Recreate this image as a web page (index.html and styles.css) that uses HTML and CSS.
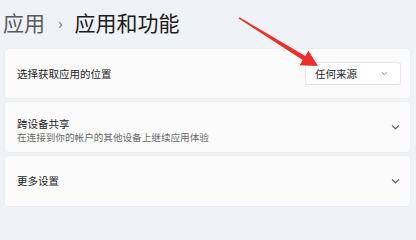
FILE: index.html
```html
<!DOCTYPE html>
<html lang="zh">
<head>
<meta charset="utf-8">
<link rel="stylesheet" href="styles.css">
</head>
<body>
<div class="page">
  <header class="header">
    <span class="crumb">应用</span>
    <span class="sep">›</span>
    <span class="title">应用和功能</span>
  </header>
  <div class="cards">
    <div class="card">
      <div class="label">选择获取应用的位置</div>
      <div class="select">
        <span>任何来源</span>
        <svg class="chev-sm" width="7" height="5" viewBox="0 0 7 5"><path d="M0.8 1.2 L3.5 3.8 L6.2 1.2" fill="none" stroke="#8a8a8a" stroke-width="1"/></svg>
      </div>
    </div>
    <div class="card">
      <div class="text">
        <div class="label">跨设备共享</div>
        <div class="sub">在连接到你的帐户的其他设备上继续应用体验</div>
      </div>
      <svg class="chev" width="9" height="6" viewBox="0 0 9 6"><path d="M1 1.3 L4.5 4.7 L8 1.3" fill="none" stroke="#555" stroke-width="1.1"/></svg>
    </div>
    <div class="card">
      <div class="label">更多设置</div>
      <svg class="chev" width="9" height="6" viewBox="0 0 9 6"><path d="M1 1.3 L4.5 4.7 L8 1.3" fill="none" stroke="#555" stroke-width="1.1"/></svg>
    </div>
  </div>
  <svg class="arrow" width="416" height="214" viewBox="0 0 416 214">
    <polygon points="239.4,17.2 305.3,55.9 308.4,50.8 318,66 299.6,65.2 302.7,60.1 238.6,18.6" fill="#ec2f2a"/>
  </svg>
</div>
</body>
</html>
```
FILE: styles.css
```css
html, body {
  margin: 0;
  padding: 0;
}
body {
  background: #eff3f8;
  font-family: "Noto Sans CJK SC", "Noto Sans", sans-serif;
  width: 416px;
  height: 214px;
  overflow: hidden;
}
.page {
  position: relative;
  width: 416px;
  height: 214px;
}
.header {
  height: 48px;
  display: flex;
  align-items: center;
  padding-left: 3px;
  padding-bottom: 4px;
  box-sizing: border-box;
  font-size: 21px;
  line-height: 1;
}
.crumb {
  color: #5a5a5a;
}
.sep {
  color: #6a6a6a;
  font-size: 15px;
  margin: 0 12px 0 13px;
}
.title {
  color: #1c1c1c;
}
.cards {
  display: flex;
  flex-direction: column;
  gap: 2px;
  padding: 0 5px 0 4px;
}
.card {
  height: 51px;
  background: #fbfbfc;
  border: 1px solid #ebedf0;
  border-radius: 4px;
  box-sizing: border-box;
  display: flex;
  align-items: center;
  justify-content: space-between;
  padding: 0 10px 0 12px;
}
.card + .card {
  height: 52px;
}
.label {
  font-size: 10.5px;
  color: #1e1e1e;
  line-height: 14px;
}
.text {
  padding-top: 5px;
}
.sub {
  font-size: 9.6px;
  color: #6b6b6b;
  line-height: 12px;
}
.select {
  width: 96px;
  height: 23px;
  box-sizing: border-box;
  background: #ffffff;
  border: 1px solid #e6e7e9;
  border-bottom-color: #dcdcdc;
  border-radius: 3px;
  display: flex;
  align-items: center;
  justify-content: space-between;
  padding: 0 12px 0 9px;
  font-size: 10.5px;
  color: #1e1e1e;
  margin-right: -1px;
}
.chev {
  display: block;
}
.chev-sm {
  display: block;
}
.arrow {
  position: absolute;
  left: 0;
  top: 0;
  pointer-events: none;
}
```
